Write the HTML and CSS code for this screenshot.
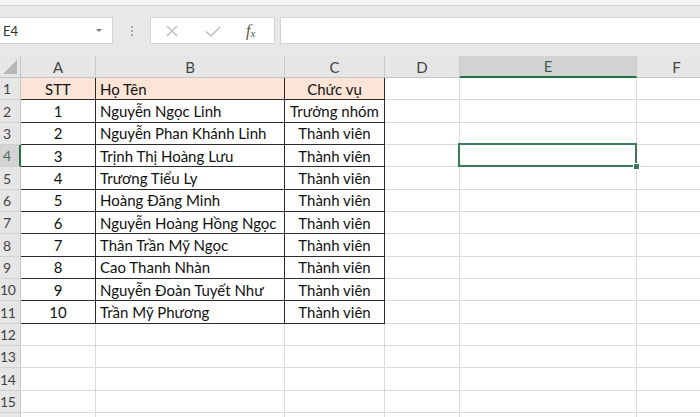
FILE: index.html
```html
<!DOCTYPE html>
<html lang="vi">
<head>
    <meta charset="UTF-8">
    <meta name="viewport" content="width=device-width, initial-scale=1.0">
    <title>Danh sách nhóm</title>
    <link rel="stylesheet" href="styles.css">
</head>
<body>
    <div class="window">
        <div class="ribbon-edge"></div>

        <div class="formula-bar">
            <div class="name-box">
                <span>E4</span>
                <span class="caret"></span>
            </div>
            <div class="grip">
                <i></i><i></i><i></i>
            </div>
            <div class="fx-box">
                <svg class="fx-icon" width="16" height="16" viewBox="0 0 16 16">
                    <path d="M3 3 L13 13 M13 3 L3 13" stroke="#bcbcbc" stroke-width="1.4" fill="none"/>
                </svg>
                <svg class="fx-icon" width="18" height="16" viewBox="0 0 18 16">
                    <path d="M2 8.5 L7 13 L16 4" stroke="#bcbcbc" stroke-width="1.4" fill="none"/>
                </svg>
                <span class="fx">f<sub>x</sub></span>
            </div>
            <div class="formula-input"></div>
        </div>

        <div class="sheet">
            <table class="grid">
                <colgroup>
                    <col class="c-head">
                    <col class="c-a">
                    <col class="c-b">
                    <col class="c-c">
                    <col class="c-d">
                    <col class="c-e">
                    <col class="c-f">
                </colgroup>
                <thead>
                    <tr>
                        <th class="corner"><span class="tri"></span></th>
                        <th>A</th>
                        <th>B</th>
                        <th>C</th>
                        <th>D</th>
                        <th class="active">E</th>
                        <th>F</th>
                    </tr>
                </thead>
                <tbody>
                    <tr class="title">
                        <th><span>1</span></th>
                        <td class="bd center">STT</td>
                        <td class="bd">Họ Tên</td>
                        <td class="bd center">Chức vụ</td>
                        <td></td><td></td><td></td>
                    </tr>
                    <tr>
                        <th><span>2</span></th>
                        <td class="bd center">1</td>
                        <td class="bd">Nguyễn Ngọc Linh</td>
                        <td class="bd center">Trưởng nhóm</td>
                        <td></td><td></td><td></td>
                    </tr>
                    <tr>
                        <th><span>3</span></th>
                        <td class="bd center">2</td>
                        <td class="bd">Nguyễn Phan Khánh Linh</td>
                        <td class="bd center">Thành viên</td>
                        <td></td><td></td><td></td>
                    </tr>
                    <tr>
                        <th class="active"><span>4</span></th>
                        <td class="bd center">3</td>
                        <td class="bd">Trịnh Thị Hoàng Lưu</td>
                        <td class="bd center">Thành viên</td>
                        <td></td>
                        <td class="selected"><span class="sel-box"></span><span class="handle"></span></td>
                        <td></td>
                    </tr>
                    <tr>
                        <th><span>5</span></th>
                        <td class="bd center">4</td>
                        <td class="bd">Trương Tiểu Ly</td>
                        <td class="bd center">Thành viên</td>
                        <td></td><td></td><td></td>
                    </tr>
                    <tr>
                        <th><span>6</span></th>
                        <td class="bd center">5</td>
                        <td class="bd">Hoàng Đăng Minh</td>
                        <td class="bd center">Thành viên</td>
                        <td></td><td></td><td></td>
                    </tr>
                    <tr>
                        <th><span>7</span></th>
                        <td class="bd center">6</td>
                        <td class="bd">Nguyễn Hoàng Hồng Ngọc</td>
                        <td class="bd center">Thành viên</td>
                        <td></td><td></td><td></td>
                    </tr>
                    <tr>
                        <th><span>8</span></th>
                        <td class="bd center">7</td>
                        <td class="bd">Thân Trần Mỹ Ngọc</td>
                        <td class="bd center">Thành viên</td>
                        <td></td><td></td><td></td>
                    </tr>
                    <tr>
                        <th><span>9</span></th>
                        <td class="bd center">8</td>
                        <td class="bd">Cao Thanh Nhàn</td>
                        <td class="bd center">Thành viên</td>
                        <td></td><td></td><td></td>
                    </tr>
                    <tr>
                        <th><span>10</span></th>
                        <td class="bd center">9</td>
                        <td class="bd">Nguyễn Đoàn Tuyết Như</td>
                        <td class="bd center">Thành viên</td>
                        <td></td><td></td><td></td>
                    </tr>
                    <tr>
                        <th><span>11</span></th>
                        <td class="bd center">10</td>
                        <td class="bd">Trần Mỹ Phương</td>
                        <td class="bd center">Thành viên</td>
                        <td></td><td></td><td></td>
                    </tr>
                    <tr>
                        <th><span>12</span></th>
                        <td></td><td></td><td></td><td></td><td></td><td></td>
                    </tr>
                    <tr>
                        <th><span>13</span></th>
                        <td></td><td></td><td></td><td></td><td></td><td></td>
                    </tr>
                    <tr>
                        <th><span>14</span></th>
                        <td></td><td></td><td></td><td></td><td></td><td></td>
                    </tr>
                    <tr>
                        <th><span>15</span></th>
                        <td></td><td></td><td></td><td></td><td></td><td></td>
                    </tr>
                    <tr>
                        <th></th>
                        <td></td><td></td><td></td><td></td><td></td><td></td>
                    </tr>
                </tbody>
            </table>
        </div>
    </div>
</body>
</html>
```

FILE: styles.css
```css
body {
    margin: 0;
    padding: 0;
    font-family: Lato, "Noto Sans", sans-serif;
    background-color: #fff;
    color: #111;
}
.window {
    width: 700px;
    height: 417px;
    overflow: hidden;
    display: flex;
    flex-direction: column;
    background-color: #e8e8e8;
}
.ribbon-edge {
    height: 5px;
    flex: none;
    background-color: #f4f4f4;
    border-bottom: 1px solid #d6d6d6;
}

/* formula bar */
.formula-bar {
    flex: none;
    display: flex;
    align-items: stretch;
    height: 27px;
    padding: 11px 0 12px 0;
}
.name-box {
    width: 113px;
    box-sizing: border-box;
    background-color: #fff;
    border: 1px solid #d4d4d4;
    border-left: none;
    display: flex;
    align-items: center;
    justify-content: space-between;
    padding: 0 10px 0 3px;
    font-size: 13px;
    color: #333;
}
.caret {
    width: 0;
    height: 0;
    border-left: 3px solid transparent;
    border-right: 3px solid transparent;
    border-top: 3px solid #7a7a7a;
}
.grip {
    width: 37px;
    display: flex;
    flex-direction: column;
    align-items: center;
    justify-content: center;
    gap: 2px;
}
.grip i {
    width: 2px;
    height: 2px;
    background-color: #a8a8a8;
}
.fx-box {
    width: 125px;
    box-sizing: border-box;
    background-color: #fff;
    border: 1px solid #d4d4d4;
    display: flex;
    align-items: center;
    padding: 0 12px 0 13px;
    gap: 24px;
}
.fx {
    font-family: "Liberation Serif", serif;
    font-style: italic;
    font-size: 16px;
    color: #555;
    line-height: 1;
}
.fx sub {
    font-size: 11px;
    vertical-align: -1px;
}
.formula-input {
    flex: 1;
    margin-left: 5px;
    background-color: #fff;
    border: 1px solid #d4d4d4;
    border-right: none;
}

/* sheet */
.sheet {
    flex: 1;
    overflow: hidden;
    background-color: #fff;
}
.grid {
    border-collapse: separate;
    border-spacing: 0;
    table-layout: fixed;
    width: 717px;
    font-size: 15px;
}
.c-head { width: 21px; }
.c-a { width: 75px; }
.c-b { width: 189px; }
.c-c { width: 100px; }
.c-d { width: 75px; }
.c-e { width: 177px; }
.c-f { width: 80px; }

.grid th,
.grid td {
    box-sizing: border-box;
    padding: 0;
    border-right: 1px solid #dadada;
    border-bottom: 1px solid #dadada;
    white-space: nowrap;
    overflow: hidden;
}
.grid thead th {
    height: 22px;
    background-color: #e6e6e6;
    color: #444;
    font-weight: normal;
    font-size: 15px;
    border-right-color: #c8c8c8;
    border-bottom-color: #c4c4c4;
}
.grid thead th.active {
    background-color: #d3d3d3;
    color: #3f5f4e;
    border-bottom: 2px solid #217346;
}
.corner {
    position: relative;
}
.tri {
    position: absolute;
    right: 3px;
    bottom: 3px;
    width: 0;
    height: 0;
    border-left: 14px solid transparent;
    border-bottom: 14px solid #b7b7b7;
}
.grid tbody tr {
    height: 22.35px;
}
.grid tbody th {
    background-color: #e6e6e6;
    color: #444;
    font-weight: normal;
    font-size: 14px;
    border-right-color: #c8c8c8;
    border-bottom-color: #d0d0d0;
}
.grid tbody th span {
    display: block;
    width: 14px;
    text-align: center;
    letter-spacing: -0.3px;
}
.grid tbody th.active {
    background-color: #d3d3d3;
    color: #4d6b5b;
    border-right: 2px solid #217346;
}
.grid td {
    padding: 0 4px;
    vertical-align: middle;
}
.grid td.bd {
    border-right-color: #2b2b2b;
    border-bottom-color: #2b2b2b;
}
.grid tr.title td.bd {
    background-color: #fce4d6;
}
.center {
    text-align: center;
}
.selected {
    position: relative;
    overflow: visible !important;
}
.sel-box {
    position: absolute;
    left: -2px;
    top: -2px;
    right: -1px;
    bottom: -1px;
    border: 2px solid #3d7a5a;
}
.handle {
    position: absolute;
    right: -4px;
    bottom: -4px;
    width: 5px;
    height: 5px;
    background-color: #3d7a5a;
    border: 1px solid #fff;
}
```
